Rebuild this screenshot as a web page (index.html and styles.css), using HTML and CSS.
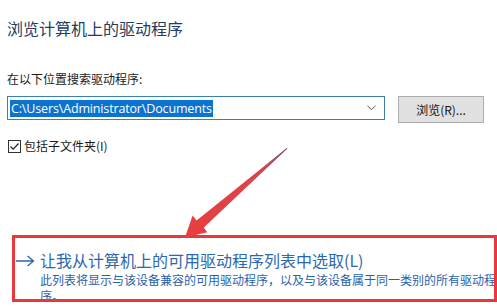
FILE: index.html
```html
<!DOCTYPE html>
<html lang="zh-CN">
<head>
<meta charset="utf-8">
<title>浏览计算机上的驱动程序</title>
<link rel="stylesheet" href="styles.css">
</head>
<body>
<div class="page">
  <h1 class="title">浏览计算机上的驱动程序</h1>
  <div class="label">在以下位置搜索驱动程序:</div>
  <div class="pathrow">
    <div class="combo">
      <span class="sel">C:\Users\Administrator\Documents</span>
      <svg class="chev" width="9" height="6" viewBox="0 0 9 6"><path d="M0.5 0.8 L4.5 4.6 L8.5 0.8" fill="none" stroke="#555" stroke-width="1"/></svg>
    </div>
    <div class="btn">浏览(R)...</div>
  </div>
  <div class="checkrow">
    <span class="checkbox">
      <svg width="13" height="13" viewBox="0 0 13 13"><rect x="0.5" y="0.5" width="12" height="12" fill="#fff" stroke="#333"/><path d="M2.5 6.5 L5.2 9.2 L10.5 3.5" fill="none" stroke="#222" stroke-width="1.2"/></svg>
    </span>
    <span class="checklabel">包括子文件夹(I)</span>
  </div>
  <div class="pick">
    <svg class="arrow" width="20" height="12" viewBox="0 0 20 12"><path d="M1 6 H18 M12.5 1 L18.5 6 L12.5 11" fill="none" stroke="#2a64ab" stroke-width="1.3"/></svg>
    <div class="picktext">
      <div class="picktitle">让我从计算机上的可用驱动程序列表中选取(L)</div>
      <div class="pickdesc">此列表将显示与该设备兼容的可用驱动程序，以及与该设备属于同一类别的所有驱动程序。</div>
    </div>
  </div>
</div>
<div class="redbox"></div>
<svg class="redarrow" width="497" height="307" viewBox="0 0 497 307">
  <defs>
    <linearGradient id="g" x1="287" y1="149" x2="185" y2="237" gradientUnits="userSpaceOnUse">
      <stop offset="0" stop-color="#7a4a60"/>
      <stop offset="0.25" stop-color="#d8454c"/>
      <stop offset="1" stop-color="#ea3e3e"/>
    </linearGradient>
  </defs>
  <polygon points="287.5,148.5 203.8,227.4 207.2,232.2 185,237.5 192.6,215.6 196.6,220.4 286.8,148" fill="url(#g)"/>
</svg>
</body>
</html>
```
FILE: styles.css
```css
html, body {
  margin: 0;
  padding: 0;
  background: #fff;
}
body {
  width: 497px;
  height: 307px;
  overflow: hidden;
  position: relative;
  font-family: "Noto Sans CJK SC", "Noto Sans", sans-serif;
}
.page {
  padding: 17px 0 0 7px;
}
.title {
  margin: 0;
  font-size: 16px;
  line-height: 22px;
  font-weight: normal;
  color: #243c5e;
}
.label {
  margin-top: 32px;
  font-size: 12px;
  line-height: 16px;
  color: #1a1a1a;
}
.pathrow {
  margin-top: 9px;
  display: flex;
  align-items: flex-start;
  gap: 13px;
}
.combo {
  box-sizing: border-box;
  width: 378px;
  height: 24px;
  border: 1px solid #3c7fb1;
  display: flex;
  align-items: center;
  padding: 0 8px 0 2px;
  justify-content: space-between;
}
.sel {
  background: #0a74d0;
  color: #fff;
  font-size: 12.5px;
  line-height: 17px;
  padding: 0 1px;
  font-family: "Open Sans", "Noto Sans", sans-serif;
  letter-spacing: -0.15px;
}
.chev {
  display: block;
}
.btn {
  box-sizing: border-box;
  width: 86px;
  height: 27px;
  background: #e1e1e1;
  border: 1px solid #adadad;
  font-size: 12px;
  line-height: 25px;
  text-align: center;
  color: #111;
}
.checkrow {
  margin-top: 16px;
  display: flex;
  align-items: center;
  gap: 3px;
  padding-left: 1px;
}
.checkbox svg {
  display: block;
}
.checklabel {
  font-size: 12px;
  line-height: 14px;
  color: #1a1a1a;
}
.pick {
  margin-top: 96px;
  display: flex;
  align-items: flex-start;
  padding-left: 8px;
}
.arrow {
  display: block;
  margin-top: 6px;
  margin-right: 5px;
}
.picktext {
  width: 456px;
}
.picktitle {
  font-size: 16px;
  line-height: 22px;
  color: #2c68b0;
}
.pickdesc {
  font-size: 12px;
  line-height: 16px;
  color: #2962ab;
  margin-top: 1px;
}
.redbox {
  position: absolute;
  left: 12px;
  top: 235px;
  width: 485px;
  height: 67px;
  box-sizing: border-box;
  border: 3px solid #e8383c;
}
.redarrow {
  position: absolute;
  left: 0;
  top: 0;
  pointer-events: none;
}
```
